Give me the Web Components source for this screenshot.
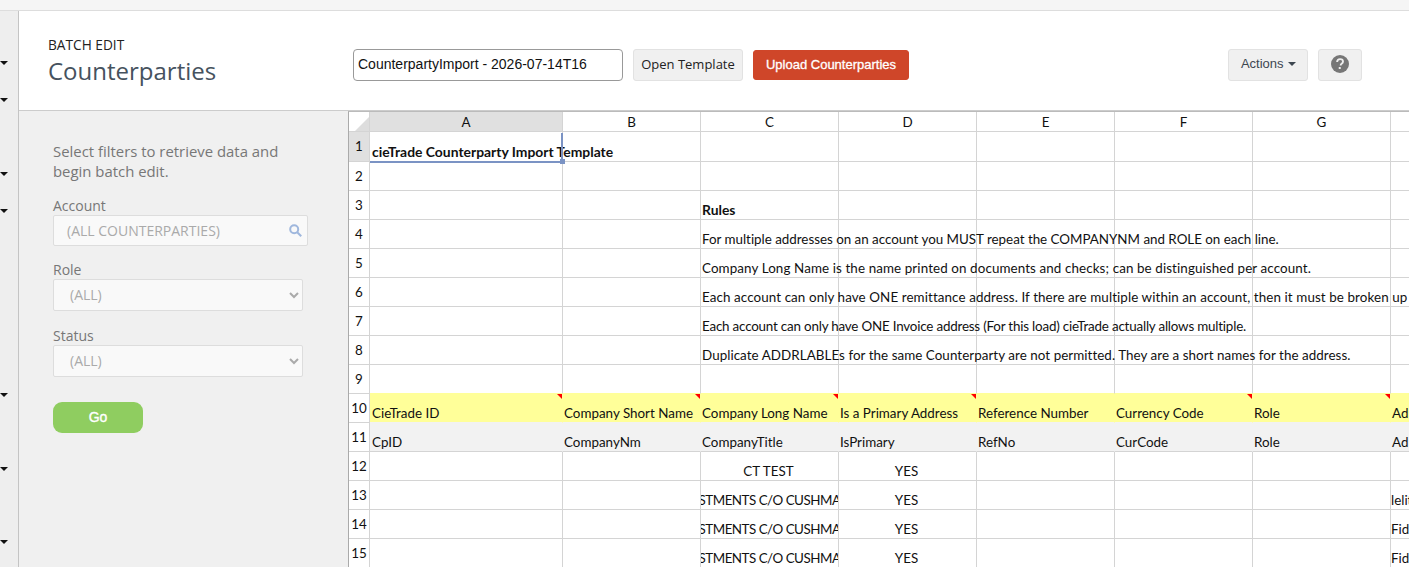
<!DOCTYPE html>
<html>
<head>
<meta charset="utf-8">
<title>Batch Edit - Counterparties</title>
<style>
    html, body { margin: 0; height: 100%; overflow: hidden; background: #fff; }
    body { display: flex; flex-direction: column; font-family: "Open Sans", sans-serif; }
</style>
</head>
<body>
<top-strip></top-strip>
<batch-page>
    <side-rail slot="rail"></side-rail>
    <page-header slot="header" kicker="BATCH EDIT" heading="Counterparties"></page-header>
    <filter-panel slot="filters"></filter-panel>
    <sheet-grid slot="sheet"></sheet-grid>
</batch-page>

<script>
class TopStrip extends HTMLElement{
    constructor(){
        super();
        this.attachShadow({mode:"open"});
        this.shadowRoot.innerHTML = `<style>
            :host{ display:block; height:10px; flex:none; background:#f5f5f5; border-bottom:1px solid #ddd; }
        </style>`;
    }
}

class BatchPage extends HTMLElement{
    constructor(){
        super();
        this.attachShadow({mode:"open"});
        this.shadowRoot.innerHTML = `<style>
            :host{ display:grid; flex:1; min-height:0; grid-template-columns:19px 329px 1fr; grid-template-rows:100px 1fr; }
            .rail{ grid-row:1 / 3; min-height:0; }
            .head{ grid-column:2 / 4; min-width:0; }
            .body{ min-height:0; min-width:0; overflow:hidden; }
        </style>
        <div class="rail"><slot name="rail"></slot></div>
        <div class="head"><slot name="header"></slot></div>
        <div class="body"><slot name="filters"></slot></div>
        <div class="body"><slot name="sheet"></slot></div>`;
    }
}

class SideRail extends HTMLElement{
    constructor(){
        super();
        this.attachShadow({mode:"open"});
        //one menu row each, only some of them have a submenu caret
        const carets = [1,1,0,1,1,0,0,0,0,1,0,1,0,1];
        const rows = carets.map(c => `<div class="row">${c ? '<i></i>' : ''}</div>`).join("");
        this.shadowRoot.innerHTML = `<style>
            :host{ display:block; height:100%; box-sizing:border-box; background:#eee; border-right:1px solid #c4c4c4; padding-top:34px; overflow:hidden; }
            .row{ height:36.85px; display:flex; align-items:center; }
            i{ display:block; width:0; height:0; border:4px solid transparent; border-top-color:#111; border-bottom:0; }
        </style>${rows}`;
    }
}

class PageHeader extends HTMLElement{
    constructor(){
        super();
        this.attachShadow({mode:"open"});
        this.shadowRoot.innerHTML = `<style>
            :host{ display:flex; align-items:center; box-sizing:border-box; height:100px; background:#fff; border-bottom:1px solid #ccc; padding:9px 47px 0 29px; }
            .title{ width:305px; flex:none; padding-bottom:6px; }
            .kicker{ font-size:13.7px; line-height:18px; color:#222; }
            h1{ margin:0; font-size:24px; line-height:34px; font-weight:400; color:#46525e; }
            input{ box-sizing:border-box; width:270px; height:32px; margin:0 10px 0 0; padding:0 4px 3px; border:1px solid #999; border-radius:4px;
                font:14px "Liberation Sans", sans-serif; color:#111; outline:none; }
            button{ box-sizing:border-box; height:32px; margin:0; border:1px solid #e2e2e2; border-radius:3px; background:#f0f0f0; color:#222; padding:0; }
            .open{ width:110px; font:13px "Open Sans", sans-serif; margin-right:10px; padding-bottom:2px; }
            .upload{ width:156px; height:30px; background:#cf4629; border-color:#cf4629; color:#fff; padding-bottom:2px;
                font:13px "Liberation Sans", sans-serif; -webkit-text-stroke:.3px #fff; }
            .grow{ flex:1; }
            .actions{ width:80px; font:13px "Liberation Sans", sans-serif; color:#3d4650; margin-right:10px; padding:0 1px 4px 2px; }
            .actions b{ display:inline-block; width:0; height:0; margin-left:1px; vertical-align:middle; border:4px solid transparent; border-top-color:#3d4650; border-bottom:0; }
            .help{ width:44px; display:flex; align-items:center; justify-content:center; padding-bottom:2px; }
        </style>
        <div class="title">
            <div class="kicker">${this.getAttribute("kicker")}</div>
            <h1>${this.getAttribute("heading")}</h1>
        </div>
        <input type="text" value="CounterpartyImport - 2026-07-14T16">
        <button class="open">Open Template</button>
        <button class="upload">Upload Counterparties</button>
        <div class="grow"></div>
        <button class="actions">Actions <b></b></button>
        <button class="help">
            <svg width="18" height="18" viewBox="0 0 18 18">
                <circle cx="9" cy="9" r="9" fill="#777"/>
                <path d="M6.1 7c.1-1.9 1.3-2.9 3-2.9 1.7 0 2.9 1 2.9 2.4 0 1-.5 1.6-1.4 2.2-.7.5-.9.8-.9 1.5v.3" fill="none" stroke="#eee" stroke-width="1.9"/>
                <rect x="7.75" y="12" width="2" height="2" fill="#eee"/>
            </svg>
        </button>`;
    }
}

class FilterPanel extends HTMLElement{
    constructor(){
        super();
        this.attachShadow({mode:"open"});
        this.shadowRoot.innerHTML = `<style>
            :host{ display:block; height:100%; box-sizing:border-box; background:#f0f0f0; padding:30px 0 0 34px; color:#777; }
            p{ margin:0 0 14px; width:255px; font-size:14.9px; line-height:20px; }
            label{ display:block; height:19px; padding-top:1px; font-size:14px; line-height:20px; }
            .search{ box-sizing:border-box; width:255px; height:31px; margin-bottom:13px; display:flex; align-items:center; padding:0 5px 0 13px;
                background:#f9f9f9; border:1px solid #ddd; border-radius:2px; font-size:14px; color:#aaa; }
            .search span{ flex:1; }
            select{ display:block; box-sizing:border-box; width:250px; height:32px; margin:0 0 14px; padding:0 0 2px 12px; background:#f9f9f9;
                border:1px solid #ddd; border-radius:2px; font:14px "Open Sans", sans-serif; color:#aaa; outline:none; }
            select.last{ margin-bottom:25px; }
            button{ display:block; width:90px; height:31px; padding:0 0 2px; border:0; border-radius:9px; background:#8fcd60; color:#fff;
                font:14px "Liberation Sans", sans-serif; -webkit-text-stroke:.35px #fff; }
        </style>
        <p>Select filters to retrieve data and begin batch edit.</p>
        <label>Account</label>
        <div class="search"><span>(ALL COUNTERPARTIES)</span>
            <svg width="13" height="13" viewBox="0 0 13 13" fill="none" stroke="#9fb7dd" stroke-width="2"><circle cx="5.2" cy="5.2" r="4"/><path d="M8.2 8.2l4 4"/></svg>
        </div>
        <label>Role</label>
        <select><option>(ALL)</option></select>
        <label>Status</label>
        <select class="last"><option>(ALL)</option></select>
        <button>Go</button>`;
    }
}

const SHEET_ROWS = {
    1: {A:"!cieTrade Counterparty Import Template"},
    3: {C:"!Rules"},
    4: {C:"For multiple addresses on an account you MUST repeat the COMPANYNM and ROLE on each line."},
    5: {C:"Company Long Name is the name printed on documents and checks; can be distinguished per account."},
    6: {C:"Each account can only have ONE remittance address. If there are multiple within an account, then it must be broken up"},
    7: {C:"Each account can only have ONE Invoice address (For this load) cieTrade actually allows multiple."},
    8: {C:"Duplicate ADDRLABLEs for the same Counterparty are not permitted. They are a short names for the address."},
    10: {A:"CieTrade ID",B:"Company Short Name",C:"Company Long Name",D:"Is a Primary Address",E:"Reference Number",F:"Currency Code",G:"Role",H:"Ad"},
    11: {A:"CpID",B:"CompanyNm",C:"CompanyTitle",D:"IsPrimary",E:"RefNo",F:"CurCode",G:"Role",H:"Ad"},
    12: {C:"CT TEST",D:"YES"},
    13: {C:"STMENTS C/O CUSHMA",D:"YES",H:"lelit"},
    14: {C:"STMENTS C/O CUSHMA",D:"YES",H:"Fid"},
    15: {C:"STMENTS C/O CUSHMA",D:"YES",H:"Fid"}
};
const SHEET_COLS = ["A","B","C","D","E","F","G","H"];
const NOTE_CELLS = ["A","B","C","D","F","G"];
//Lato is not quite Calibri, these long lines need a nudge to end in the same place
const ROW_SPACING = {4:-0.02, 5:0.1, 6:0.09, 7:-0.2, 8:0.05};

class SheetGrid extends HTMLElement{
    constructor(){
        super();
        this.attachShadow({mode:"open"});
        this.render();
    }
    //spreadsheet is one big css grid, built from the table above
    render(){
        let cells = `<div class="cell corner"><i></i></div>`;
        SHEET_COLS.forEach(c => {
            cells += `<div class="cell colhead ${c=="A" ? "on" : ""}">${c=="H" ? "" : c}</div>`;
        });
        for(let r = 1; r <= 15; r++){
            const row = SHEET_ROWS[r] || {};
            cells += `<div class="cell rowhead ${r==1 ? "on" : ""}">${r}</div>`;
            SHEET_COLS.forEach(c => {
                let text = row[c] || "";
                let cls = "cell";
                if(text[0] == "!"){ text = text.slice(1); cls += " bold"; }
                if(c == "A") cls += " first";
                if(r == 9) cls += " above";
                if(r == 10) cls += " yellow";
                if(r == 11) cls += " grey";
                if(r >= 12 && (c == "C" || c == "D")) cls += " center";
                if(r >= 13 && c == "C") cls += " tight";
                if(r >= 13 && c == "H") cls += " flush";
                if(r >= 4 && r <= 8 && c == "C") cls += " spill";
                if(r == 1 && c == "A") cls += " spill sel";
                const note = r == 10 && NOTE_CELLS.includes(c) ? "<u></u>" : "";
                const sp = ROW_SPACING[r] && c == "C" ? ` style="letter-spacing:${ROW_SPACING[r]}px"` : "";
                cells += `<div class="${cls}"${sp}><span>${text}</span>${note}</div>`;
            });
        }
        this.shadowRoot.innerHTML = `<style>
            :host{ display:block; height:100%; box-sizing:border-box; background:#fff; border-left:1px solid #aaa; border-top:1px solid #bbb; overflow:hidden;
                font-family:Lato, sans-serif; font-size:13.4px; color:#111; }
            .grid{ display:grid; grid-template-columns:21px 193px repeat(6,138px) 138px; grid-template-rows:20px 30px repeat(14,29px); }
            .cell{ box-sizing:border-box; position:relative; border-right:1px solid #d4d4d4; border-bottom:1px solid #d4d4d4; overflow:hidden;
                display:flex; align-items:flex-end; padding:0 1px 0 1px; white-space:nowrap; line-height:18px; }
            .first{ padding-left:2px; }
            .colhead, .rowhead{ align-items:center; justify-content:center; padding:0; }
            .colhead{ padding-top:1px; }
            .rowhead{ padding-bottom:1px; }
            .on{ background:#e0e0e0; }
            .corner{ padding:0; }
            .corner i{ position:absolute; right:0; bottom:0; width:0; height:0; border-style:solid; border-width:0 0 14px 14px; border-color:transparent transparent #ddd transparent; }
            .bold{ font-weight:700; font-size:13.9px; }
            .spill{ overflow:visible; z-index:1; }
            .above{ border-bottom-color:#ffff99; }
            .yellow{ background:#ffff99; border-right-color:#ffff99; border-bottom-color:#f2f2f2; }
            .grey{ background:#f2f2f2; border-right-color:#f2f2f2; }
            .center{ justify-content:center; padding:0 2px 0 0; }
            .tight{ letter-spacing:-0.5px; padding:0; }
            .flush{ padding-left:0; }
            .cell u{ position:absolute; top:0; right:0; width:0; height:0; border-style:solid; border-width:0 5px 5px 0; border-color:transparent #f00 transparent transparent; }
            .sel:before{ content:""; position:absolute; left:0; top:1px; right:-1px; bottom:-2px; border-right:2px solid #7b93c4; border-bottom:2px solid #7b93c4; }
            .sel:after{ content:""; position:absolute; right:-3px; bottom:-3px; width:5px; height:5px; background:#7b93c4; }
        </style><div class="grid">${cells}</div>`;
    }
}

customElements.define("top-strip", TopStrip);
customElements.define("batch-page", BatchPage);
customElements.define("side-rail", SideRail);
customElements.define("page-header", PageHeader);
customElements.define("filter-panel", FilterPanel);
customElements.define("sheet-grid", SheetGrid);
</script>
</body>
</html>
